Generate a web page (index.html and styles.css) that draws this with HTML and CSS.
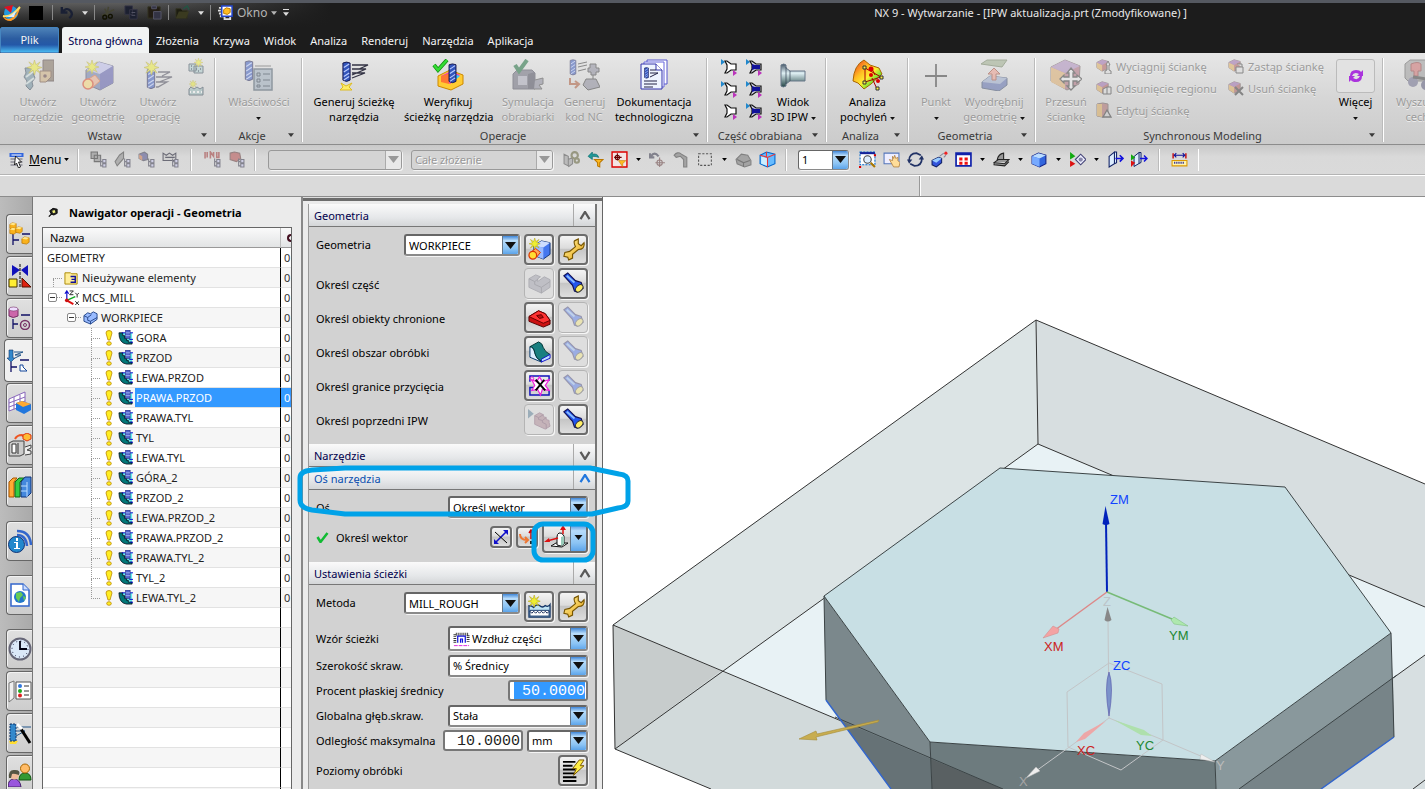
FILE: index.html
```html
<!DOCTYPE html>
<html lang="pl">
<head>
<meta charset="utf-8">
<title>NX 9 - Wytwarzanie</title>
<link rel="stylesheet" href="styles.css">
</head>
<body>
<svg class="defs" aria-hidden="true">
  <defs>
    <linearGradient id="g-rain" x1="0" y1="0" x2="1" y2="1"><stop offset="0" stop-color="#e22"/><stop offset=".35" stop-color="#fb2"/><stop offset=".55" stop-color="#fe3"/><stop offset=".8" stop-color="#3d3"/></linearGradient>
    <linearGradient id="g-steel" x1="0" y1="0" x2="0" y2="1"><stop offset="0" stop-color="#456"/><stop offset=".4" stop-color="#dff0f4"/><stop offset="1" stop-color="#244"/></linearGradient>
    <linearGradient id="g-gold" x1="0" y1="0" x2="1" y2="1"><stop offset="0" stop-color="#fff6a0"/><stop offset="1" stop-color="#e8a010"/></linearGradient>
    <symbol id="star" viewBox="0 0 16 16"><path d="M8 0l1.500 5L14 2l-3 4.500 5 1.500-5 1.500 3 4.500-4.500-3L8 16l-1.500-5L2 14l3-4.500L0 8l5-1.500L2 2l4.500 3z" fill="#ee3" stroke="#a90" stroke-width=".6"/></symbol>
    <symbol id="mill" viewBox="0 0 10 24"><path d="M1 2q4-2 8 0v19q-4 3-8 0z" fill="#35b" stroke="#114"/><path d="M2 7l6-4M2 12l6-4M2 17l6-4M2 21l6-4" stroke="#bcf" stroke-width="1.300"/></symbol>
    <symbol id="i-tool" viewBox="0 0 32 32"><path d="M3 9h9l-1 5 2 5-3 4 1 4-3 4-4-4 1-5-3-4 2-4z" fill="#689" stroke="#345"/><path d="M4 18l8-6M4 25l8-6" stroke="#cdd" stroke-width="2"/><path d="M21 1h11v21h-7v-7h-4z" fill="#765" stroke="#433"/><path d="M18 12h11v6l-5 5h-6z" fill="#ca7" stroke="#643"/><circle cx="23" cy="17" r="1.800" fill="#533"/><use href="#star" x="5" y="1" width="15" height="15"/></symbol>
    <symbol id="i-geom" viewBox="0 0 32 32"><path d="M4 11l13-8 14 4v17l-13 7-14-6z" fill="#67a" stroke="#446"/><path d="M4 11l13-8 14 4-13 8z" fill="#bbe"/><path d="M18 15v16l13-7V7z" fill="#55a"/><path d="M5 21l8-5 5 6-8 7z" fill="#ea8" stroke="#d63"/><circle cx="6" cy="25" r="5" fill="#fd7" stroke="#d42" stroke-width="1.500"/><use href="#star" x="3" y="1" width="14" height="14"/></symbol>
    <symbol id="i-oper" viewBox="0 0 32 32"><use href="#mill" x="4" y="9" width="10" height="22"/><path d="M16 13h12l-8 4M14 18h16l-13 5M14 23h11l-9 5h-2" fill="none" stroke="#445" stroke-width="1.300"/><use href="#star" x="2" y="1" width="15" height="15"/></symbol>
    <symbol id="i-props" viewBox="0 0 32 32"><use href="#mill" x="1" y="1" width="10" height="22"/><path d="M12 7h16M12 11h9" stroke="#555"/><path d="M11 10h18v21H11z" fill="#9ab" stroke="#456" stroke-width="1.500"/><path d="M14 14h3v3h-3zM14 20h3v3h-3zM14 26h3v2h-3zM20 15h7M20 21h7M20 27h7" fill="none" stroke="#234"/></symbol>
    <symbol id="i-gen" viewBox="0 0 32 32"><path d="M3 24l5 3 6-3-3 4 3 3H2l3-3z" fill="#fe6" stroke="#db2"/><use href="#mill" x="4" y="1" width="9" height="24"/><path d="M14 6h16l-9 4M14 10h14l-14 6M14 14h13l-13 5" fill="none" stroke="#334" stroke-width="1.300"/></symbol>
    <symbol id="i-verify" viewBox="0 0 32 32"><path d="M6 17l12-6 13 5v9l-12 6-13-4z" fill="#fc3" stroke="#c80"/><path d="M9 17l10-5 9 4-10 9z" fill="#e3c"/><path d="M9 17l9-3-1 11-8-2z" fill="#f73"/><path d="M19 14l9 3-8 7z" fill="#3cf"/><use href="#mill" x="16" y="4" width="9" height="21"/><path d="M2 6l4 5L15 1" fill="none" stroke="#181" stroke-width="4"/><path d="M2 6l4 5L15 1" fill="none" stroke="#3d3" stroke-width="2.500"/></symbol>
    <symbol id="i-sim" viewBox="0 0 32 32"><path d="M1 15l4-4h15l3 3v16H1z" fill="#667" stroke="#445"/><path d="M6 17h9v9H6z" fill="#aab"/><path d="M16 15l7-2v17h-7z" fill="#445"/><path d="M23 21l8-2v6l-4 1 3 4h-8" fill="#889" stroke="#444"/><path d="M3 6l4 6L15 1" fill="none" stroke="#163" stroke-width="4"/></symbol>
    <symbol id="i-nc" viewBox="0 0 32 32"><use href="#mill" x="1" y="0" width="8" height="17"/><path d="M10 5l9-2M10 8l9-2M10 12l8-2" stroke="#333"/><path d="M2 19v6h8M7 22l4 3-4 4" fill="none" stroke="#a53" stroke-width="2"/><path d="M22 5h6v4h3v4h-3v3h-5v-3h-3V9h2zM25 16v4M18 20h10l4 8-12 3-5-5z" fill="#889" stroke="#333"/></symbol>
    <symbol id="i-doc" viewBox="0 0 32 32"><path d="M9 1h20v24H9z" fill="#fff" stroke="#55c"/><path d="M6 3h20v25H6z" fill="#fff" stroke="#66d"/><path d="M3 5h15l6 6v19H3z" fill="#eef4ff" stroke="#33a"/><path d="M18 5v6h6" fill="#fff" stroke="#33a"/><use href="#mill" x="6" y="8" width="5" height="12"/><path d="M12 11h6M12 14h8l-8 4M6 22h13M6 25h13M6 28h9" fill="none" stroke="#224"/></symbol>
    <symbol id="i-ipw" viewBox="0 0 32 32"><path d="M4 6q3-2 5 0v3l4 3h15v10H13l-4 3v2q-3 2-5 0z" fill="url(#g-steel)" stroke="#678"/><path d="M9 8v17M13 12v10" stroke="#345" stroke-width=".7"/></symbol>
    <symbol id="i-draft" viewBox="0 0 32 32"><path d="M1 22Q2 6 12 1l6 5 9 3 3 6-11 10-7 5-6-6z" fill="url(#g-rain)" stroke="#a60"/><path d="M13 9l16 9-16 5zM20 19l5 11M19 8l4 8" fill="none" stroke="#a00"/><g fill="#fe4" stroke="#333"><path d="M11 7h3v3h-3zM11 22h3v3h-3zM28 17h3v3h-3zM24 28h3v3h-3z"/></g><circle cx="19" cy="10" r="2.500" fill="#d00"/><circle cx="19" cy="16" r="2" fill="#d00"/><circle cx="26" cy="22" r="2" fill="#d00"/></symbol>
    <symbol id="i-point" viewBox="0 0 32 32"><path d="M16 5v23M5 17h22" stroke="#333" stroke-width="1.800"/></symbol>
    <symbol id="i-extract" viewBox="0 0 32 32"><path d="M3 5l6-4h20l-5 7z" fill="#9a8" stroke="#675"/><path d="M4 23l8-6 17 2v7l-8 6-17-3z" fill="#56a" stroke="#346"/><path d="M4 23l8-6 17 2-7 6z" fill="#9ac"/><path d="M14 21v-6h-4l6-6 6 6h-4v6z" fill="#e98" stroke="#943"/></symbol>
    <symbol id="i-moveface" viewBox="0 0 32 32"><path d="M1 8l14-7 15 6-1 18-12 6-16-9z" fill="#a67" stroke="#655"/><path d="M1 8l14 6v16L1 23z" fill="#da6"/><path d="M1 8l14-7 15 6-15 7z" fill="#a8b"/><path d="M21 9l4 5h-2v4h4v-2l5 4-5 4v-2h-4v5h2l-4 4-4-4h2v-5h-5v2l-4-4 4-4v2h5v-4h-2z" fill="#eee" stroke="#333" stroke-width="1.300"/></symbol>
    <symbol id="i-find" viewBox="0 0 32 32"><path d="M1 5l5-4h24v13l-5 8H4l-3-3z" fill="#999" stroke="#555"/><path d="M7 5q7-3 10 0v7h-3v5h-4v-5H7z" fill="#c66" stroke="#833"/><circle cx="9" cy="23" r="5" fill="#668"/><circle cx="22" cy="26" r="5" fill="#557"/><path d="M9 18l14 2" stroke="#333" stroke-width="3"/></symbol>
    <symbol id="i-more" viewBox="0 0 20 20"><path d="M4 10q0-6 6-6 4 0 5 2l2-2v6h-6l2-2q-5-3-7 2zM16 10q0 6-6 6-4 0-5-2l-2 2v-6h6l-2 2q5 3 7-2z" fill="#a3d"/></symbol>
    <symbol id="s-prog" viewBox="0 0 16 16"><path d="M1 6h7v7H1zM6 8h9v7H6z" fill="#acc" stroke="#345"/><path d="M3 8h1M8 11h1M12 11h1M10 13h1M3 11h1" stroke="#234" stroke-width="1.500"/><use href="#star" x="6" y="0" width="9" height="9"/></symbol>
    <symbol id="s-meth" viewBox="0 0 16 16"><path d="M1 9l2-2 3 2 3-2 3 2 3-2v8H1z" fill="#9bb" stroke="#345"/><path d="M2 12h1M5 12h2M9 12h2M13 12h1" stroke="#fff" stroke-width="2"/><use href="#star" x="1" y="0" width="8" height="8"/></symbol>
    <symbol id="s-wp1" viewBox="0 0 18 18"><path d="M1 1l4 3-4 3z" fill="#28c"/><path d="M5 3h2l4 3h5v6h-5l-4 3H5l2-4V7z" fill="#fff" stroke="#111" stroke-width="1.200"/><path d="M13 12l4 3-4 3z" fill="#b3b"/></symbol>
    <symbol id="s-wp2" viewBox="0 0 18 18"><path d="M1 1l4 3-4 3z" fill="#28c"/><path d="M5 3h2l4 3h5v6h-5l-4 3H5l2-4V7z" fill="#ccd" stroke="#111" stroke-width="1.200"/><path d="M7 6l3 1h5v4h-5l-3 1z" fill="#119"/><path d="M13 12l4 3-4 3z" fill="#b3b"/></symbol>
    <symbol id="s-wp3" viewBox="0 0 18 18"><path d="M5 3h2l4 3h5v6h-5l-4 3H5l2-4V7z" fill="#fff" stroke="#111" stroke-width="1.200"/><path d="M13 12l4 3-4 3z" fill="#b3b"/></symbol>
    <symbol id="s-box" viewBox="0 0 16 16"><path d="M1 5l6-3 7 2v8l-7 3-6-4z" fill="#a55" stroke="#655"/><path d="M1 5l6 3v7l-6-4z" fill="#da5"/><path d="M1 5l6-3 7 2-7 4z" fill="#96a"/></symbol>
    <symbol id="f-pull" viewBox="0 0 16 16"><use href="#s-box" width="14" height="14"/><path d="M12 3l2 4h-1v5l2 1v3H9v-3l2-1V7h-1z" fill="#ddd" stroke="#333"/></symbol>
    <symbol id="f-offset" viewBox="0 0 16 16"><use href="#s-box" width="14" height="14"/><path d="M7 9l4-2v7H7zM11 7h4v7h-4" fill="#ddd" stroke="#333"/></symbol>
    <symbol id="f-edit" viewBox="0 0 16 16"><path d="M1 2q6-2 11 0v12q-6 2-11 0z" fill="#a66" stroke="#655"/><path d="M1 2h5v13l-5-1z" fill="#da5"/><path d="M11 8l4 7H7z" fill="#ccc" stroke="#333" stroke-width="1.300"/></symbol>
    <symbol id="f-repl" viewBox="0 0 16 16"><use href="#s-box" width="14" height="14"/><path d="M8 9h7v6H8zM9 6h5v3" fill="#ddd" stroke="#333"/></symbol>
    <symbol id="f-del" viewBox="0 0 16 16"><use href="#s-box" width="14" height="14"/><path d="M7 7l8 8M15 7l-8 8" stroke="#333" stroke-width="2"/></symbol>
    <symbol id="t-tree" viewBox="0 0 16 16"><path d="M10 7v7h2M10 10h2" fill="none" stroke="#556"/><path d="M12 8h3v3h-3zM12 12h3v3h-3z" fill="#cce" stroke="#556"/></symbol>
    <symbol id="t-1" viewBox="0 0 16 16"><path d="M1 1h6v6H1zM4 4h6v6H4z" fill="#999" stroke="#444"/><use href="#t-tree" width="16" height="16"/></symbol>
    <symbol id="t-2" viewBox="0 0 16 16"><path d="M5 4l4-3v6l-6 7-2-4z" fill="#999" stroke="#555"/><use href="#t-tree" width="16" height="16"/></symbol>
    <symbol id="t-3" viewBox="0 0 16 16"><path d="M1 3l5-2 3 2v5L5 9 1 7z" fill="#669" stroke="#556"/><path d="M1 3l3 2v4L1 7z" fill="#c86"/><use href="#t-tree" width="16" height="16"/></symbol>
    <symbol id="t-4" viewBox="0 0 16 16"><path d="M1 2l3 2 3-2 3 2 3-2v7H1zM3 6h9" fill="#ccc" stroke="#334"/><use href="#t-tree" width="16" height="16"/></symbol>
    <symbol id="t-5" viewBox="0 0 16 16"><path d="M1 1v6M3 1v5M6 7V1l3 4V1M12 1v5h2V1" fill="none" stroke="#a55" stroke-width="1.500"/><use href="#t-tree" width="16" height="16"/></symbol>
    <symbol id="t-6" viewBox="0 0 16 16"><path d="M2 2l4-1 5 1 1 5-4 3-6-2z" fill="#b66" stroke="#755"/><use href="#t-tree" width="16" height="16"/></symbol>
    <symbol id="t-menu" viewBox="0 0 16 16"><path d="M1 1h14v4H1z" fill="#36d"/><path d="M3 3h10" stroke="#fff"/><path d="M2 7h12M2 10h12M2 13h12" stroke="#667"/><path d="M7 4l6 6H10l2 5-2 1-2-5-2 2z" fill="#fff" stroke="#000" stroke-width=".8"/></symbol>
    <symbol id="t-7" viewBox="0 0 16 16"><path d="M1 3l4 2v9l-4-2zM5 8l4-2v6l-4 3" fill="#aaa" stroke="#666"/><circle cx="11" cy="4" r="3" fill="none" stroke="#775" stroke-width="2"/><circle cx="13" cy="9" r="2" fill="none" stroke="#775" stroke-width="2"/></symbol>
    <symbol id="t-filter" viewBox="0 0 16 16"><path d="M1 5l4-4v2q5-1 6 3-2-1-6-1v3z" fill="#299" stroke="#066" stroke-width=".6"/><path d="M7 8h8l-3 3v4l-2-1v-3z" fill="#fb2" stroke="#b70"/></symbol>
    <symbol id="t-8" viewBox="0 0 16 16"><path d="M1 1h14v14H1z" fill="#f4e4e4" stroke="#d00" stroke-width="1.300"/><path d="M6 2v7M3 6h7" stroke="#600"/><circle cx="6" cy="6" r="2" fill="none" stroke="#600"/><path d="M7 9h7l-3 3v3z" fill="#fb2" stroke="#b70" stroke-width=".5"/></symbol>
    <symbol id="t-9" viewBox="0 0 16 16"><path d="M2 5q3-5 7 0M1 2v4h4" fill="none" stroke="#556" stroke-width="2"/><path d="M10 6v9M6 11h9" stroke="#755"/><circle cx="10" cy="11" r="2.500" fill="none" stroke="#755"/></symbol>
    <symbol id="t-10" viewBox="0 0 16 16"><path d="M1 4q3-4 7-1l5 3v9h-3V8L7 5 3 6z" fill="#888" stroke="#555"/></symbol>
    <symbol id="t-rect" viewBox="0 0 16 16"><path d="M1.500 2.500h12v11h-12z" fill="none" stroke="#555" stroke-dasharray="2 1.500"/></symbol>
    <symbol id="t-11" viewBox="0 0 16 16"><path d="M1 8l5-5 6 1 3 5v4l-6 2-7-3z" fill="#888" stroke="#555"/><path d="M2 8l6 3v4M8 11l6-2" stroke="#444" fill="none"/></symbol>
    <symbol id="t-cube" viewBox="0 0 16 16"><path d="M1 4l6-3 8 2v9l-7 3-7-3z" fill="#6bf" stroke="#06c"/><path d="M2 5l6 2v7l-6-2z" fill="#cef"/><path d="M1 4l7 2 7-3M8 6v9M7 1v5" stroke="#e33" fill="none"/></symbol>
    <symbol id="t-fit" viewBox="0 0 16 16"><path d="M1 1h14v12H1z" fill="#fff" stroke="#06c" stroke-dasharray="2 1"/><path d="M1 1h14v2H1z" fill="#129"/><circle cx="8" cy="8" r="3.500" fill="#def" stroke="#444"/><path d="M11 11l4 4" stroke="#a70" stroke-width="2"/><path d="M0 14h2v2H0zM14 3h2v2h-2z" fill="#d00"/></symbol>
    <symbol id="t-pan" viewBox="0 0 16 16"><path d="M1 2h14v10H1z" fill="#eef" stroke="#57b"/><path d="M6 8l3 1V5l1 2 1-3 1 3 2-1v3l2 2-1 4h-5z" fill="#fd9" stroke="#a73" stroke-width=".7"/></symbol>
    <symbol id="t-rot" viewBox="0 0 16 16"><path d="M2 9Q2 2 9 2l4 2M14 7q0 7-7 7l-4-2" fill="none" stroke="#236" stroke-width="1.600"/><path d="M0 8h5L2 12zM16 8h-5l3-4z" fill="#236"/></symbol>
    <symbol id="t-persp" viewBox="0 0 16 16"><path d="M1 9l6-3 3 1v4l-5 4-4-2z" fill="#35d" stroke="#126"/><path d="M1 9l6-3 3 1-5 4z" fill="#9cf"/><path d="M8 5l4-3M12 6l2-2" stroke="#889"/><circle cx="14" cy="2" r="1.500" fill="#e22"/></symbol>
    <symbol id="t-grid" viewBox="0 0 16 16"><path d="M1 2h14v12H1z" fill="#fff" stroke="#12a" stroke-width="1.600"/><path d="M1 2h14v2H1z" fill="#12a"/><path d="M4 6h3v3H4zM9 6h3v3H9zM4 10h3v3H4zM9 10h3v3H9z" fill="#e11"/></symbol>
    <symbol id="t-clip" viewBox="0 0 16 16"><path d="M4 8q1-5 6-6v6zM1 11l4-3h10l-4 4zM1 11v2l10 1 4-4" fill="#999" stroke="#222"/></symbol>
    <symbol id="t-shade" viewBox="0 0 16 16"><path d="M1 5l6-3 7 2v8l-6 3-7-3z" fill="#36d" stroke="#128"/><path d="M1 5l7 2 6-3-7-2z" fill="#bdf"/><path d="M8 7v8l-7-3V5z" fill="#7af"/></symbol>
    <symbol id="t-arrow" viewBox="0 0 16 16"><path d="M1 1l5 4-5 3z" fill="#1a1"/><path d="M1 9l5 3-5 3z" fill="#d11"/><path d="M6 8l5-5 5 5-5 5z" fill="#eef" stroke="#447"/><circle cx="11" cy="8" r="2" fill="#88a"/></symbol>
    <symbol id="t-sec" viewBox="0 0 16 16"><path d="M2 5l5-4v11l-5 3zM7 1h2v10l-2 1" fill="#def" stroke="#126"/><path d="M8 7h6M12 4l3 3-3 3" fill="none" stroke="#11d" stroke-width="1.500"/></symbol>
    <symbol id="t-sec2" viewBox="0 0 16 16"><use href="#t-sec" x="1" width="15" height="16"/><path d="M0 3l4 3-4 3z" fill="#1a1"/><path d="M0 9l4 2-4 4z" fill="#d11"/></symbol>
    <symbol id="t-meas" viewBox="0 0 16 16"><path d="M2 2v5M14 2v5" fill="none" stroke="#c22" stroke-width="1.500"/><path d="M3 4h10M5 2L3 4l2 2M11 2l2 2-2 2" stroke="#119" fill="none"/><path d="M1 9h14v5H1z" fill="#fff4b0" stroke="#d90"/><path d="M3 11h10" stroke="#119" stroke-width="2" stroke-dasharray="1 1"/></symbol>
    <symbol id="q-logo" viewBox="0 0 20 18"><circle cx="9" cy="9" r="7" fill="#29d"/><path d="M1 12q5 7 13-2l4-8q-1 11-9 15-7 0-8-5z" fill="#f92"/><path d="M1 12Q9 14 18 3" fill="none" stroke="#fd6" stroke-width="2"/><path d="M2 3l9-2-2 8z" fill="#d12"/><path d="M5 13q5-2 9-6l-2 6z" fill="#def"/></symbol>
    <symbol id="q-undo" viewBox="0 0 16 16"><path d="M3 2v6h6M3 8q5-6 9-2t-1 8" fill="none" stroke="#1a2034" stroke-width="2.500"/></symbol>
    <symbol id="q-cut" viewBox="0 0 16 16"><path d="M4 4l5 9M1 11l13-6M8 2l-2 9" stroke="#443" stroke-width="1.600"/><circle cx="4" cy="13" r="2" fill="none" stroke="#110" stroke-width="1.500"/><circle cx="10" cy="12" r="2" fill="none" stroke="#110" stroke-width="1.500"/></symbol>
    <symbol id="q-copy" viewBox="0 0 16 16"><path d="M1 1h8v9H1zM6 5h8v10H6z" fill="#1c2030" stroke="#334"/><path d="M8 8h4M8 11h4" stroke="#556"/></symbol>
    <symbol id="q-paste" viewBox="0 0 16 16"><path d="M1 2h13v12H1z" fill="#221c14" stroke="#332"/><path d="M5 1h5v3H5zM7 7h8v8H7z" fill="#334" stroke="#556"/></symbol>
    <symbol id="q-open" viewBox="0 0 16 16"><path d="M1 4h5l2 2h5v8H1z" fill="#1c1c10" stroke="#332"/><path d="M1 14l3-7h11l-3 7z" fill="#3a3a20"/><path d="M9 4l4-3 2 4" fill="none" stroke="#254" stroke-width="1.500"/></symbol>
    <symbol id="q-win" viewBox="0 0 16 16"><path d="M1 3h4M0 6h3M1 9h4M2 12h5v3h6v-3" fill="none" stroke="#ddd" stroke-width="2"/><path d="M4 1h11v11H4z" fill="#fff" stroke="#24c" stroke-width="1.600"/><path d="M6 5l3-2 4 1v4l-3 2-4-1z" fill="#fb2" stroke="#b70"/></symbol>
    <symbol id="cubelet" viewBox="0 0 10 10"><path d="M1 3l3-2 5 1v5L6 9 1 8z" fill="#f9b21c" stroke="#b87400" stroke-width=".8"/><path d="M1 3l3-2 5 1-3 2z" fill="#ffe68a"/></symbol>
    <symbol id="r-asm" viewBox="0 0 24 24"><path d="M5 12v11M5 18h6M14 12h8" stroke="#116" stroke-width="1.300" fill="none"/><use href="#cubelet" x="1" y="0" width="8" height="8"/><use href="#cubelet" x="1" y="5" width="8" height="8"/><use href="#cubelet" x="7" y="4" width="8" height="8"/><use href="#cubelet" x="13" y="14" width="9" height="9"/></symbol>
    <symbol id="r-con" viewBox="0 0 24 24"><path d="M4 1l8 5-8 6zM20 1l-7 5 7 6z" fill="#11b"/><path d="M12 0v24" stroke="#000" stroke-dasharray="3 1"/><path d="M1 15h8v8H1z" fill="#fe3" stroke="#430"/><path d="M14 14v9h9z" fill="#d21" stroke="#510"/></symbol>
    <symbol id="r-part" viewBox="0 0 24 24"><path d="M1 3v7q4 3 9 0V3z" fill="#c6a" stroke="#736"/><ellipse cx="5.500" cy="3" rx="4.500" ry="2" fill="#edf" stroke="#736" stroke-width=".6"/><path d="M13 9h9M5 13v10M5 18h5" stroke="#116" stroke-width="1.300"/><circle cx="17" cy="19" r="4.500" fill="none" stroke="#736" stroke-width="1.500"/><circle cx="17" cy="19" r="1.500" fill="none" stroke="#736"/></symbol>
    <symbol id="r-op" viewBox="0 0 24 24"><path d="M2 1h4v8h2l-4 4-4-4h2z" fill="#38c" stroke="#136" stroke-width=".6"/><path d="M7 3h9l-8 3M8 6h6l-6 3" stroke="#258" fill="none"/><path d="M13 11h9M4 13v10M4 18h6" stroke="#116" stroke-width="1.300"/><path d="M13 16h3v2l4 4h-7z" fill="#fff" stroke="#149"/></symbol>
    <symbol id="r-fea" viewBox="0 0 24 24"><path d="M1 8l16-7v13L1 20zM1 12l16-6M1 16l16-6M6 6v12M12 4v12" fill="#fff" stroke="#86b"/><path d="M8 12l6-2 9 3v6l-7 4-8-4z" fill="#27d"/><path d="M8 12l6-2 9 3-8 3z" fill="#fa3"/></symbol>
    <symbol id="r-mach" viewBox="0 0 24 24"><path d="M1 10l4-2h11v13l-4 2H1z" fill="#ccc" stroke="#444"/><path d="M4 11h4v9H4zM10 10v11" fill="#fff" stroke="#333"/><path d="M7 6q2-4 7-4l2 2" fill="none" stroke="#e52" stroke-width="2"/><path d="M15 2l4-2 4 2v4l-4 2-4-2z" fill="#fb3" stroke="#d31"/><path d="M17 14l6-2v3l-4 2 4 1v3l-6 1" fill="#eee" stroke="#444"/></symbol>
    <symbol id="r-lib" viewBox="0 0 24 24"><path d="M1 7l4-4h4L6 7v15H1z" fill="#fa3" stroke="#a50"/><path d="M7 7l4-4h5l-4 4v15H7z" fill="#3c4" stroke="#161"/><path d="M13 7l4-5h6v16l-4 4h-6z" fill="#48d" stroke="#137"/><path d="M13 11h6M13 16h6M19 7v15" stroke="#bdf"/></symbol>
    <symbol id="r-info" viewBox="0 0 24 24"><path d="M9 6q9 0 10 11M9 2q13 0 14 14" fill="none" stroke="#36c" stroke-width="2.500"/><circle cx="8.500" cy="15.500" r="8" fill="#28c" stroke="#137"/><path d="M8 9h2v3H8zM6 13h4v6h2v1H6v-1h2v-5H6z" fill="#fff"/></symbol>
    <symbol id="r-web" viewBox="0 0 24 24"><path d="M3 1h12l6 6v16H3z" fill="#fff" stroke="#36c" stroke-width="1.500"/><path d="M15 1v6h6" fill="#cdf" stroke="#36c"/><circle cx="12" cy="14" r="6" fill="#27c"/><path d="M8 10l5-1 2 3-3 3-1 4-3-4zM15 13l3 1-2 4z" fill="#6c5"/></symbol>
    <symbol id="r-clock" viewBox="0 0 24 24"><circle cx="12" cy="12" r="10.500" fill="#dbe8f8" stroke="#667" stroke-width="2"/><circle cx="12" cy="12" r="8" fill="none" stroke="#224" stroke-dasharray="1 3.200"/><path d="M12 4v8h7" fill="none" stroke="#001" stroke-width="1.800"/></symbol>
    <symbol id="r-role" viewBox="0 0 24 24"><path d="M1 4l5-2v17l-5 4z" fill="#eee" stroke="#777"/><path d="M8 3h15v17H8z" fill="#fff" stroke="#555"/><circle cx="12" cy="7" r="2" fill="#37d"/><circle cx="12" cy="12" r="2" fill="#2a2"/><circle cx="12" cy="16.500" r="2" fill="#d22"/><path d="M16 7h5M16 12h5M16 16h5" stroke="#333"/></symbol>
    <symbol id="r-wiz" viewBox="0 0 24 24"><path d="M1 20l4-1 5 1-2 3H2z" fill="#fd3"/><path d="M2 3h6v17H2z" fill="#38c" stroke="#136" stroke-dasharray="2 1"/><path d="M9 6h14M9 10h8l-9 5" stroke="#258" fill="none"/><path d="M13 8l9 14" stroke="#000" stroke-width="3"/><path d="M9 3l5 5" stroke="#fff" stroke-width="3"/></symbol>
    <symbol id="r-team" viewBox="0 0 24 24"><path d="M11 17q0-7 6-7t6 7z" fill="#393" stroke="#151"/><circle cx="17" cy="5.500" r="4.500" fill="#fb6" stroke="#a60"/><path d="M0 24q0-8 6-8t7 8z" fill="#95d" stroke="#426"/><circle cx="6.500" cy="12" r="4.500" fill="#eb9"/><path d="M1 15q-1-9 6-8 6 0 4 5-6-2-7-1l-1 4z" fill="#554"/></symbol>
    <symbol id="n-pin" viewBox="0 0 12 12"><path d="M1 11l4-4" stroke="#000" stroke-width="1.500"/><path d="M2 4l4-3 5 1v5L7 9 4 8z" fill="#222" stroke="#000"/><path d="M5 4l3-1 1 3-3 1z" fill="#ee7"/></symbol>
    <symbol id="n-fold" viewBox="0 0 16 16"><path d="M1 3h6l1 1h6v11H1z" fill="#fe9" stroke="#a80"/><path d="M7 7h5v6H7M8 10h4" fill="none" stroke="#119" stroke-width="1.500"/></symbol>
    <symbol id="n-mcs" viewBox="0 0 16 16"><path d="M3 12V2M1 4l2-3 2 3" fill="none" stroke="#11c" stroke-width="1.300"/><path d="M3 11l9-4" stroke="#1a2" stroke-width="1.500"/><path d="M3 11l7 4" stroke="#d11" stroke-width="2"/><circle cx="3" cy="11" r="2" fill="#c11"/><path d="M6 1h4L6 5h4M12 3l2 2 2-2M14 5v3M12 12l4 4M16 12l-4 4" stroke="#222" fill="none"/></symbol>
    <symbol id="n-wp" viewBox="0 0 16 16"><path d="M1 6l4-3 3 1 3-2 4 2v6l-7 5-7-3z" fill="#9bf" stroke="#248"/><path d="M1 6l4 2v3l3 1v3M5 8l4-3M8 12l7-4" fill="none" stroke="#248"/></symbol>
    <symbol id="n-ex" viewBox="0 0 8 16"><path d="M1 3q0-2.500 3-2.500T7 3L5 10H3z" fill="#fe2" stroke="#b80" stroke-width=".8"/><ellipse cx="4" cy="13.500" rx="2.300" ry="1.800" fill="#fe2" stroke="#b80" stroke-width=".8"/></symbol>
    <symbol id="n-op" viewBox="0 0 16 16"><path d="M4 3h11v11h-5z" fill="#6ee"/><path d="M1 3h4v3h2v3h2v2h2v2h4v2H9Q1 14 1 3z" fill="#077" stroke="#001" stroke-width=".8"/><path d="M8 0h5v9H8z" fill="#56c" stroke="#226" stroke-width=".6"/><path d="M8 3h5M8 6h5" stroke="#bcf" stroke-width=".7"/><path d="M4 3h4M13 3h3M12 10h4M13 13h3" stroke="#00c"/></symbol>
    <symbol id="d-flash" viewBox="0 0 24 24"><path d="M2 4l4-3 8 8 6 2 2 6-6 4-3-1-2-6z" fill="#25e" stroke="#115" stroke-width="1.200"/><path d="M5 4l8 7" stroke="#8bf" stroke-width="2"/><ellipse cx="18" cy="17" rx="4.500" ry="3" transform="rotate(-45 18 17)" fill="#fe6" stroke="#333"/></symbol>
    <symbol id="d-wrench" viewBox="0 0 24 24"><path d="M13 3l4-2v5l3 2 3-3q1 7-6 7l-6 5v4l-4 2-1-3-4-1 1-4 5-1 6-5q-2-4-1-6z" fill="url(#g-gold)" stroke="#750" stroke-width="1.200"/></symbol>
    <symbol id="d-geom" viewBox="0 0 24 24"><path d="M6 8l8-5 9 2v12l-7 5-10-4z" fill="#47e" stroke="#137"/><path d="M6 8l8-5 9 2-7 5z" fill="#cdf"/><path d="M6 8l10 2v12L6 18z" fill="#9bf"/><path d="M4 14l4-3 5 4-4 5z" fill="#fa5" stroke="#d30"/><circle cx="5" cy="18" r="4" fill="#fd3" stroke="#d30" stroke-width="1.300"/><use href="#star" x="1" y="0" width="12" height="12"/></symbol>
    <symbol id="d-part" viewBox="0 0 24 24"><path d="M1 7l7-4 5 2-3 2v3l7-5 6 3v8l-9 6L1 16z" fill="#889" stroke="#556"/><path d="M1 7l6 3v3l7 3v6M14 16l9-6M7 10l4-3" fill="none" stroke="#445"/></symbol>
    <symbol id="d-check" viewBox="0 0 24 24"><path d="M1 11l10-6 7 3 5 7v4l-7 3L1 16z" fill="#c11" stroke="#500"/><path d="M1 11l10-6 7 3 5 7-7 3z" fill="#f33" stroke="#600"/><path d="M9 10l5-1 2 3-4 1z" fill="#b11" stroke="#600"/></symbol>
    <symbol id="d-area" viewBox="0 0 24 24"><path d="M2 7q4 0 5 6 1 6 7 10L2 18z" fill="#def" stroke="#036"/><path d="M2 7l9-5q4 1 5 6 2 5 7 7l-9 7q-6-3-7-9-1-6-5-6z" fill="#197f80" stroke="#033"/><path d="M14 20l9-5v4l-9 4z" fill="#bdf" stroke="#11c"/></symbol>
    <symbol id="d-trim" viewBox="0 0 24 24"><path d="M2 8V2h20v5M22 17v5H2v-8h4" fill="none" stroke="#11b" stroke-width="1.500"/><path d="M4 6l5 2 3-5 3 5 7-2-4 6 4 5-7-1-2 6-3-6-6 1 3-5z" fill="#fff" stroke="#e2d" stroke-width="1.300"/><circle cx="4" cy="5" r="2" fill="none" stroke="#e2d"/><path d="M8 6l10 11M17 6L8 17" stroke="#000" stroke-width="2"/></symbol>
    <symbol id="d-prev" viewBox="0 0 24 24"><path d="M0 1l6 5-6 5z" fill="#257"/><path d="M7 8l5-3 4 2v2l3 1v2l3 1v2l1 4-5 3-11-5z" fill="#967" stroke="#635"/><path d="M7 8l4 2v2l4 1v2l4 2v5M11 10l5-3M15 13l4-3" fill="none" stroke="#524"/></symbol>
    <symbol id="d-meth" viewBox="0 0 24 24"><path d="M1 11q3 0 5 2 3-4 6-2 3 3 6 0 3 2 5-1v13H1z" fill="#bfe3f4" stroke="#136" stroke-width="1.300"/><path d="M2 16h20v6H2z" fill="#fff" stroke="#136"/><path d="M2 17l2 2 2-2 2 2 2-2 2 2 2-2 2 2 2-2 2 2 2-2" fill="none" stroke="#125"/><use href="#star" x="0" y="0" width="13" height="13"/></symbol>
    <symbol id="d-level" viewBox="0 0 24 24"><path d="M1 3h13M1 7h10M1 11h13M1 15h12M1 19h14M1 23h14" stroke="#000" stroke-width="2"/><path d="M18 1h5l-4 6h4L12 17l3-7h-4z" fill="#fe4" stroke="#750"/></symbol>
    <symbol id="d-rev" viewBox="0 0 16 16"><path d="M2 14L14 2" stroke="#11c" stroke-width="1.600"/><path d="M10 1h5v5zM1 10v5h5z" fill="#11c"/><path d="M2 3l12 11" stroke="#000"/></symbol>
    <symbol id="d-ori" viewBox="0 0 16 16"><path d="M1 5q0 6 7 6M6 8l3 3-3 3" fill="none" stroke="#e73" stroke-width="2"/><path d="M12 2v8M10 4l2-3 2 3" stroke="#c00" fill="none" stroke-width="1.500"/><path d="M11 12h3v3h-3z" fill="#222"/></symbol>
    <symbol id="d-vec" viewBox="0 0 26 24"><path d="M7 21l5-3h12l-6 4z" fill="#fff" stroke="#111"/><path d="M13 12v8l4 1 3-2v-8q-2-4-5-3-2 1-2 4z" fill="#fff" stroke="#111"/><path d="M17 12l3-1v8l-3 2z" fill="#9cb"/><path d="M14 13L3 16M19 9V2" stroke="#d11" stroke-width="1.500" fill="none"/><path d="M16 5l3-5 3 5zM0 17l5-4 1 4z" fill="#d11"/></symbol>
    <symbol id="d-pat" viewBox="0 0 18 16"><path d="M2 12V3h14v9" fill="none" stroke="#333" stroke-width="3" stroke-dasharray="1 1"/><path d="M5 12V5h8v7M8 12V8h2v4" fill="none" stroke="#11d" stroke-width="1.300"/><path d="M1 15h16" stroke="#d2d" stroke-dasharray="4 1"/></symbol>
    <symbol id="caret" viewBox="0 0 8 5"><path d="M0 0h8L4 5z" fill="currentColor"/></symbol>
    <symbol id="chev-up" viewBox="0 0 12 10"><path d="M1 9l5-8 5 8" fill="none" stroke="currentColor" stroke-width="2.500"/></symbol>
    <symbol id="chev-dn" viewBox="0 0 12 10"><path d="M1 1l5 8 5-8" fill="none" stroke="currentColor" stroke-width="2.500"/></symbol>
    <symbol id="tick" viewBox="0 0 12 12"><path d="M1 6l3 5 7-9" fill="none" stroke="#1b3" stroke-width="2.500"/></symbol>
  </defs>
</svg>

<div class="app">
  <header class="titlebar">
    <svg class="logo"><use href="#q-logo"/></svg>
    <button class="qa save" aria-label="Zapisz"></button><i class="qsep"></i>
    <button class="qa" aria-label="Cofnij"><svg><use href="#q-undo"/></svg></button>
    <button class="qdrop" aria-label="Historia"><svg class="caret"><use href="#caret"/></svg></button><i class="qsep"></i>
    <button class="qa" aria-label="Wytnij"><svg><use href="#q-cut"/></svg></button>
    <button class="qa" aria-label="Kopiuj"><svg><use href="#q-copy"/></svg></button>
    <button class="qa" aria-label="Wklej"><svg><use href="#q-paste"/></svg></button><i class="qsep"></i>
    <button class="qa" aria-label="Otwórz"><svg><use href="#q-open"/></svg></button>
    <button class="qdrop" aria-label="Ostatnie"><svg class="caret"><use href="#caret"/></svg></button><i class="qsep"></i>
    <button class="okno"><svg><use href="#q-win"/></svg>Okno<svg class="caret"><use href="#caret"/></svg></button>
    <button class="qmore" aria-label="Dostosuj"><svg class="caret"><use href="#caret"/></svg></button>
    <h1 class="title">NX 9 - Wytwarzanie - [IPW aktualizacja.prt (Zmodyfikowane) ]</h1>
  </header>

  <nav class="tabs">
    <button class="tab file">Plik</button>
    <button class="tab active">Strona główna</button>
    <button class="tab">Złożenia</button><button class="tab">Krzywa</button><button class="tab">Widok</button><button class="tab">Analiza</button><button class="tab">Renderuj</button><button class="tab">Narzędzia</button><button class="tab">Aplikacja</button>
  </nav>

  <div class="ribbon">
    <section class="group g-insert">
      <div class="tools">
        <button class="big w60" disabled><svg><use href="#i-tool"/></svg>Utwórz<br>narzędzie</button>
        <button class="big w60" disabled><svg><use href="#i-geom"/></svg>Utwórz<br>geometrię</button>
        <button class="big w60" disabled><svg><use href="#i-oper"/></svg>Utwórz<br>operację</button>
        <div class="minis"><button disabled aria-label="Utwórz program"><svg><use href="#s-prog"/></svg></button><button disabled aria-label="Utwórz metodę"><svg><use href="#s-meth"/></svg></button></div>
      </div>
      <footer><span>Wstaw</span><svg class="caret"><use href="#caret"/></svg></footer>
    </section>
    <section class="group g-actions">
      <div class="tools mid"><button class="big" disabled><svg><use href="#i-props"/></svg>Właściwości<br><svg class="caret dark"><use href="#caret"/></svg></button></div>
      <footer><span>Akcje</span><svg class="caret"><use href="#caret"/></svg></footer>
    </section>
    <section class="group g-oper">
      <div class="tools gap9">
        <button class="big w82"><svg><use href="#i-gen"/></svg>Generuj ścieżkę<br>narzędzia</button>
        <button class="big w88"><svg><use href="#i-verify"/></svg>Weryfikuj<br>ścieżkę narzędzia</button>
        <button class="big w54" disabled><svg><use href="#i-sim"/></svg>Symulacja<br>obrabiarki</button>
        <button class="big w40" disabled><svg><use href="#i-nc"/></svg>Generuj<br>kod NC</button>
        <button class="big w82"><svg><use href="#i-doc"/></svg>Dokumentacja<br>technologiczna</button>
      </div>
      <footer><span>Operacje</span><svg class="caret"><use href="#caret"/></svg></footer>
    </section>
    <section class="group g-part">
      <div class="tools">
        <div class="wpgrid"><button aria-label="Przed"><svg><use href="#s-wp1"/></svg></button><button aria-label="Przed 3D"><svg><use href="#s-wp2"/></svg></button><button aria-label="Bieżąca"><svg><use href="#s-wp1"/></svg></button><button aria-label="Bieżąca 3D"><svg><use href="#s-wp2"/></svg></button><button aria-label="Po"><svg><use href="#s-wp3"/></svg></button><button aria-label="Po 3D"><svg><use href="#s-wp2"/></svg></button></div>
        <button class="big w54"><svg><use href="#i-ipw"/></svg>Widok<br>3D IPW <svg class="caret dark"><use href="#caret"/></svg></button>
      </div>
      <footer><span>Część obrabiana</span><svg class="caret"><use href="#caret"/></svg></footer>
    </section>
    <section class="group g-analysis">
      <div class="tools mid"><button class="big"><svg><use href="#i-draft"/></svg>Analiza<br>pochyleń <svg class="caret dark"><use href="#caret"/></svg></button></div>
      <footer><span>Analiza</span><svg class="caret"><use href="#caret"/></svg></footer>
    </section>
    <section class="group g-geom">
      <div class="tools">
        <button class="big w54" disabled><svg><use href="#i-point"/></svg>Punkt<br><svg class="caret dark"><use href="#caret"/></svg></button>
        <button class="big w62" disabled><svg><use href="#i-extract"/></svg>Wyodrębnij<br>geometrię <svg class="caret dark"><use href="#caret"/></svg></button>
      </div>
      <footer><span>Geometria</span><svg class="caret"><use href="#caret"/></svg></footer>
    </section>
    <section class="group g-sync">
      <div class="tools">
        <button class="big w60" disabled><svg><use href="#i-moveface"/></svg>Przesuń<br>ściankę</button>
        <div class="lines l1"><button disabled><svg><use href="#f-pull"/></svg>Wyciągnij ściankę</button><button disabled><svg><use href="#f-offset"/></svg>Odsunięcie regionu</button><button disabled><svg><use href="#f-edit"/></svg>Edytuj ściankę</button></div>
        <div class="lines l2"><button disabled><svg><use href="#f-repl"/></svg>Zastąp ściankę</button><button disabled><svg><use href="#f-del"/></svg>Usuń ściankę</button></div>
        <button class="big more"><span><svg><use href="#i-more"/></svg></span>Więcej<br><svg class="caret dark"><use href="#caret"/></svg></button>
      </div>
      <footer><span>Synchronous Modeling</span><svg class="caret"><use href="#caret"/></svg></footer>
    </section>
    <section class="group g-find">
      <div class="tools"><button class="big w60" disabled><svg><use href="#i-find"/></svg>Wyszukaj<br>cechy</button></div>
      <footer></footer>
    </section>
  </div>

  <div class="toolbar">
    <button class="menu"><svg><use href="#t-menu"/></svg><span><u>M</u>enu</span><svg class="caret"><use href="#caret"/></svg></button>
    <div class="tset ta off"><button disabled aria-label="Widok programu"><svg><use href="#t-1"/></svg></button><button disabled aria-label="Widok narzędzi"><svg><use href="#t-2"/></svg></button><button disabled aria-label="Widok geometrii"><svg><use href="#t-3"/></svg></button><button disabled aria-label="Widok metod"><svg><use href="#t-4"/></svg></button></div>
    <div class="tset tb off"><button disabled aria-label="Szukaj"><svg><use href="#t-5"/></svg></button><button disabled aria-label="Obiekty"><svg><use href="#t-6"/></svg></button></div>
    <div class="tset tc">
      <span class="combo dis c134"><select disabled aria-label="Filtr typu"><option></option></select><span class="drop"><svg><use href="#caret"/></svg></span></span>
      <span class="combo dis c142"><select disabled aria-label="Zakres wyboru"><option>Całe złożenie</option></select><span class="drop"><svg><use href="#caret"/></svg></span></span>
      <button disabled class="off" aria-label="Połączone"><svg><use href="#t-7"/></svg></button><button aria-label="Resetuj filtry"><svg><use href="#t-filter"/></svg></button><button aria-label="Filtr"><svg><use href="#t-8"/></svg></button><button class="dd" aria-label="Więcej"><svg class="caret"><use href="#caret"/></svg></button><button disabled class="off" aria-label="Cofnij wybór"><svg><use href="#t-9"/></svg></button><button disabled class="off" aria-label="Wyżej"><svg><use href="#t-10"/></svg></button><button aria-label="Prostokąt"><svg><use href="#t-rect"/></svg></button><button class="dd" aria-label="Więcej"><svg class="caret"><use href="#caret"/></svg></button><button disabled class="off" aria-label="Bryła"><svg><use href="#t-11"/></svg></button><button aria-label="Sześcian"><svg><use href="#t-cube"/></svg></button>
    </div>
    <div class="tset td">
      <span class="combo c51"><select aria-label="Warstwa"><option>1</option></select><span class="drop"><svg><use href="#caret"/></svg></span></span>
      <button aria-label="Dopasuj"><svg><use href="#t-fit"/></svg></button><button aria-label="Przesuń"><svg><use href="#t-pan"/></svg></button><button aria-label="Obróć"><svg><use href="#t-rot"/></svg></button><button aria-label="Perspektywa"><svg><use href="#t-persp"/></svg></button><button aria-label="Układ"><svg><use href="#t-grid"/></svg></button><button class="dd" aria-label="Więcej"><svg class="caret"><use href="#caret"/></svg></button><button aria-label="Przekrój"><svg><use href="#t-clip"/></svg></button><button class="dd" aria-label="Więcej"><svg class="caret"><use href="#caret"/></svg></button><button aria-label="Cieniowanie"><svg><use href="#t-shade"/></svg></button><button class="dd" aria-label="Więcej"><svg class="caret"><use href="#caret"/></svg></button><button aria-label="Pokaż"><svg><use href="#t-arrow"/></svg></button><button class="dd" aria-label="Więcej"><svg class="caret"><use href="#caret"/></svg></button><button aria-label="Edytuj przekrój"><svg><use href="#t-sec"/></svg></button><button aria-label="Obetnij przekrój"><svg><use href="#t-sec2"/></svg></button>
    </div>
    <div class="tset te"><button aria-label="Pomiar"><svg><use href="#t-meas"/></svg></button></div>
  </div>
  <div class="cue"><div class="cue-left"></div><div class="cue-right"></div></div>

  <main class="work">
    <aside class="resbar">
      <button aria-label="Nawigator złożenia"><svg><use href="#r-asm"/></svg></button>
      <button aria-label="Nawigator wiązań"><svg><use href="#r-con"/></svg></button>
      <button aria-label="Nawigator części"><svg><use href="#r-part"/></svg></button>
      <button class="on" aria-label="Nawigator operacji"><svg><use href="#r-op"/></svg></button>
      <button aria-label="Nawigator cech"><svg><use href="#r-fea"/></svg></button>
      <button aria-label="Nawigator obrabiarki"><svg><use href="#r-mach"/></svg></button>
      <button aria-label="Biblioteka"><svg><use href="#r-lib"/></svg></button>
      <button class="apart" aria-label="HD3D"><svg><use href="#r-info"/></svg></button>
      <button class="apart" aria-label="Przeglądarka"><svg><use href="#r-web"/></svg></button>
      <button class="apart" aria-label="Historia"><svg><use href="#r-clock"/></svg></button>
      <button aria-label="Role"><svg><use href="#r-role"/></svg></button>
      <button aria-label="Kreator"><svg><use href="#r-wiz"/></svg></button>
      <button aria-label="Zespół"><svg><use href="#r-team"/></svg></button>
    </aside>

    <section class="navigator">
      <h2><svg><use href="#n-pin"/></svg>Nawigator operacji - Geometria</h2>
      <div class="treebox">
        <table class="tree">
          <thead><tr><th>Nazwa</th><th class="c2"><b></b></th></tr></thead>
          <tbody>
            <tr><td><div class="n0">GEOMETRY</div></td><td>0</td></tr>
            <tr><td><div class="n1"><i class="branch"></i><svg><use href="#n-fold"/></svg>Nieużywane elementy</div></td><td>0</td></tr>
            <tr><td><div class="n1e"><i class="exp"></i><i class="dash"></i><svg><use href="#n-mcs"/></svg>MCS_MILL</div></td><td>0</td></tr>
            <tr><td><div class="n2e"><i class="exp"></i><i class="dash"></i><svg><use href="#n-wp"/></svg>WORKPIECE</div></td><td>0</td></tr>
            <tr><td><div class="n3"><i class="branch"></i><svg class="ex"><use href="#n-ex"/></svg><svg><use href="#n-op"/></svg><span>GORA</span></div></td><td>0</td></tr>
            <tr><td><div class="n3"><i class="branch"></i><svg class="ex"><use href="#n-ex"/></svg><svg><use href="#n-op"/></svg><span>PRZOD</span></div></td><td>0</td></tr>
            <tr><td><div class="n3"><i class="branch"></i><svg class="ex"><use href="#n-ex"/></svg><svg><use href="#n-op"/></svg><span>LEWA.PRZOD</span></div></td><td>0</td></tr>
            <tr class="sel"><td><div class="n3"><i class="branch"></i><svg class="ex"><use href="#n-ex"/></svg><svg><use href="#n-op"/></svg><span>PRAWA.PRZOD</span></div></td><td>0</td></tr>
            <tr><td><div class="n3"><i class="branch"></i><svg class="ex"><use href="#n-ex"/></svg><svg><use href="#n-op"/></svg><span>PRAWA.TYL</span></div></td><td>0</td></tr>
            <tr><td><div class="n3"><i class="branch"></i><svg class="ex"><use href="#n-ex"/></svg><svg><use href="#n-op"/></svg><span>TYL</span></div></td><td>0</td></tr>
            <tr><td><div class="n3"><i class="branch"></i><svg class="ex"><use href="#n-ex"/></svg><svg><use href="#n-op"/></svg><span>LEWA.TYL</span></div></td><td>0</td></tr>
            <tr><td><div class="n3"><i class="branch"></i><svg class="ex"><use href="#n-ex"/></svg><svg><use href="#n-op"/></svg><span>GÓRA_2</span></div></td><td>0</td></tr>
            <tr><td><div class="n3"><i class="branch"></i><svg class="ex"><use href="#n-ex"/></svg><svg><use href="#n-op"/></svg><span>PRZOD_2</span></div></td><td>0</td></tr>
            <tr><td><div class="n3"><i class="branch"></i><svg class="ex"><use href="#n-ex"/></svg><svg><use href="#n-op"/></svg><span>LEWA.PRZOD_2</span></div></td><td>0</td></tr>
            <tr><td><div class="n3"><i class="branch"></i><svg class="ex"><use href="#n-ex"/></svg><svg><use href="#n-op"/></svg><span>PRAWA.PRZOD_2</span></div></td><td>0</td></tr>
            <tr><td><div class="n3"><i class="branch"></i><svg class="ex"><use href="#n-ex"/></svg><svg><use href="#n-op"/></svg><span>PRAWA.TYL_2</span></div></td><td>0</td></tr>
            <tr><td><div class="n3"><i class="branch"></i><svg class="ex"><use href="#n-ex"/></svg><svg><use href="#n-op"/></svg><span>TYL_2</span></div></td><td>0</td></tr>
            <tr><td><div class="n3"><i class="branch last"></i><svg class="ex"><use href="#n-ex"/></svg><svg><use href="#n-op"/></svg><span>LEWA.TYL_2</span></div></td><td>0</td></tr>
            <tr><td></td><td></td></tr><tr><td></td><td></td></tr><tr><td></td><td></td></tr><tr><td></td><td></td></tr><tr><td></td><td></td></tr><tr><td></td><td></td></tr><tr><td></td><td></td></tr><tr><td></td><td></td></tr><tr><td></td><td></td></tr><tr><td></td><td></td></tr>
          </tbody>
        </table>
      </div>
    </section>

    <form class="dialog">
      <div class="dialog-top"></div>
      <div class="panel">
        <h3>Geometria<button type="button" aria-label="Zwiń"><svg><use href="#chev-up"/></svg></button></h3>
        <div class="body geo">
          <div class="row tall top"><label for="geo">Geometria</label><span class="combo c116"><select id="geo"><option>WORKPIECE</option></select><span class="drop"><svg><use href="#caret"/></svg></span></span><button type="button" class="sq" aria-label="Nowa geometria"><svg><use href="#d-geom"/></svg></button><button type="button" class="sq" aria-label="Edytuj"><svg><use href="#d-wrench"/></svg></button></div>
          <div class="row tall"><span class="lab">Określ część</span><button type="button" class="sq" disabled aria-label="Część"><svg><use href="#d-part"/></svg></button><button type="button" class="sq" aria-label="Pokaż"><svg><use href="#d-flash"/></svg></button></div>
          <div class="row tall"><span class="lab">Określ obiekty chronione</span><button type="button" class="sq" aria-label="Obiekty chronione"><svg><use href="#d-check"/></svg></button><button type="button" class="sq" disabled aria-label="Pokaż"><svg><use href="#d-flash"/></svg></button></div>
          <div class="row tall"><span class="lab">Określ obszar obróbki</span><button type="button" class="sq" aria-label="Obszar obróbki"><svg><use href="#d-area"/></svg></button><button type="button" class="sq" disabled aria-label="Pokaż"><svg><use href="#d-flash"/></svg></button></div>
          <div class="row tall"><span class="lab">Określ granice przycięcia</span><button type="button" class="sq" aria-label="Granice"><svg><use href="#d-trim"/></svg></button><button type="button" class="sq" disabled aria-label="Pokaż"><svg><use href="#d-flash"/></svg></button></div>
          <div class="row tall"><span class="lab">Określ poprzedni IPW</span><button type="button" class="sq" disabled aria-label="Poprzedni IPW"><svg><use href="#d-prev"/></svg></button><button type="button" class="sq" aria-label="Pokaż"><svg><use href="#d-flash"/></svg></button></div>
        </div>
        <h3>Narzędzie<button type="button" aria-label="Rozwiń"><svg><use href="#chev-dn"/></svg></button></h3>
        <h3 class="hot">Oś narzędzia<button type="button" aria-label="Zwiń"><svg><use href="#chev-up"/></svg></button></h3>
        <div class="body axis">
          <div class="row mid"><label for="axis">Oś</label><span class="combo c140"><select id="axis"><option>Określ wektor</option></select><span class="drop"><svg><use href="#caret"/></svg></span></span></div>
          <div class="row mid"><svg class="tick"><use href="#tick"/></svg><span class="lab">Określ wektor</span><button type="button" class="sq small" aria-label="Odwróć"><svg><use href="#d-rev"/></svg></button><button type="button" class="sq small" aria-label="Orientacja"><svg><use href="#d-ori"/></svg></button><button type="button" class="sq vec" aria-label="Typ wektora"><svg><use href="#d-vec"/></svg><span class="drop"><svg><use href="#caret"/></svg></span></button></div>
        </div>
        <h3>Ustawienia ścieżki<button type="button" aria-label="Zwiń"><svg><use href="#chev-up"/></svg></button></h3>
        <div class="body path">
          <div class="row tall top"><label for="met">Metoda</label><span class="combo c116"><select id="met"><option>MILL_ROUGH</option></select><span class="drop"><svg><use href="#caret"/></svg></span></span><button type="button" class="sq" aria-label="Nowa metoda"><svg><use href="#d-meth"/></svg></button><button type="button" class="sq" aria-label="Edytuj"><svg><use href="#d-wrench"/></svg></button></div>
          <div class="row mid"><label for="pat">Wzór ścieżki</label><span class="combo c140 pic"><select id="pat"><option>Wzdłuż części</option></select><svg class="pre"><use href="#d-pat"/></svg><span class="drop"><svg><use href="#caret"/></svg></span></span></div>
          <div class="row"><label for="step">Szerokość skraw.</label><span class="combo c140"><select id="step"><option>% Średnicy</option></select><span class="drop"><svg><use href="#caret"/></svg></span></span></div>
          <div class="row"><label for="pct">Procent płaskiej średnicy</label><span class="field f80 picked"><input id="pct" type="text" value="50.0000"></span></div>
          <div class="row"><label for="cut">Globalna głęb.skraw.</label><span class="combo c140"><select id="cut"><option>Stała</option></select><span class="drop"><svg><use href="#caret"/></svg></span></span></div>
          <div class="row"><label for="dist" class="cutoff">Odległość maksymalna</label><span class="field f80"><input id="dist" type="text" value="10.0000"></span><span class="combo c61"><select aria-label="Jednostka"><option>mm</option></select><span class="drop"><svg><use href="#caret"/></svg></span></span></div>
          <div class="row tall"><span class="lab low">Poziomy obróbki</span><button type="button" class="sq" aria-label="Poziomy"><svg><use href="#d-level"/></svg></button></div>
          <div class="row tall"><span class="lab"></span><button type="button" class="sq" aria-label="Ruchy"></button></div>
        </div>
      </div>
    </form>

    <section class="view">
      <svg class="scene" viewBox="603 197 822 592" preserveAspectRatio="xMinYMin slice">
        <path d="M1036 320L1425 484V789H711L615 749 613 625z" fill="#e8f2f5"/>
        <path d="M1036 320l2 124L615 749 613 625z" fill="#dce4e5"/>
        <path d="M1036 320l389 164v123L1038 444z" fill="#d7dee0"/>
        <path d="M613 625l108 46-106 78z" fill="#c7cccc"/>
        <path d="M721 671l282 118H711l-96-40z" fill="#d2dadb"/>
        <path d="M1425 655v134h-186z" fill="#d7dfe1"/>
        <g fill="none" stroke="#333" stroke-width="1"><path d="M1425 484L1036 320 613 625l2 124 96 40M1036 320l2 124M1425 607L1038 444 615 749M613 625l390 164M1425 655l-186 134M1425 780l-12 9"/></g>
        <path d="M824 596l106 146 2 47h-41l-65-89z" fill="#7b888c"/>
        <path d="M842 721l89 38 1 30h-41z" fill="#667276"/>
        <path d="M930 742l285 19 1 28H932z" fill="#6d7b7e"/>
        <path d="M931 759l72 30h-71z" fill="#596062"/>
        <path d="M1391 633l3 104-73 52h-105l-1-28z" fill="#89989c"/>
        <path d="M1393 678l1 59-73 52h-82z" fill="#778488"/>
        <path d="M824 596l176-128 285 19 106 146-176 128-285-19z" fill="#c8dfe4"/>
        <g fill="none" stroke="#3c4446"><path d="M824 596l176-128 285 19 106 146-176 128-285-19zM824 596l2 104M930 742l2 47M1215 761l1 28M1391 633l3 104M835 717l168 72M1397 675l-158 114"/></g>
        <path d="M826 700l65 89M1394 737l-73 52" stroke="#36c" stroke-width="1.500" fill="none"/>
        <path d="M879 720l-62 14-1-3-17 8 18 1-1-3 62-15z" fill="#c8ad50" stroke="#a58c38" stroke-width=".6"/>
        <path d="M1107 592l-1-70" stroke="#02b" stroke-width="2"/><path d="M1105.500 506l4 18q-4 2-7 0z" fill="#02b"/>
        <path d="M1107 592l-52 38" stroke="#d88" stroke-width="1.500"/><path d="M1043 638l10-12 6 3-1 4z" fill="#f4a3a3" stroke="#c88" stroke-width=".5"/>
        <path d="M1107 592l65 27" stroke="#7b7" stroke-width="1.500"/><path d="M1188 626l-14-9-3 3 3 4z" fill="#aee8ae" stroke="#7b7" stroke-width=".5"/>
        <g fill="none" stroke="#c3c5c7"><path d="M1108 620l1 98M1109 663l-42 29 1 55 53 23 42-30-1-56-53-21M1109 718l-41 30-32 23M1109 718l54 22 40 17"/></g>
        <path d="M1107.500 607l4 13q-4 3-7 0z" fill="#888"/>
        <path d="M1109 672q5 14 0 44-5-30 0-44z" fill="#7b92ca" stroke="#55a" stroke-width=".6"/>
        <path d="M1106 721l-22 12-8 9 9-3z" fill="#eda7a7"/><path d="M1114 720l30 10 8 6-11-1z" fill="#aee0ac"/>
        <path d="M1026 778l10-11 4 4zM1215 762l-14-8-1 5z" fill="#eee" stroke="#bbb" stroke-width=".5"/>
        <g class="axis-text"><text x="1110" y="504" fill="#14f">ZM</text><text x="1044" y="651" fill="#c22">XM</text><text x="1169" y="640" fill="#283">YM</text><text x="1103" y="606" fill="#bcc4c8">Z</text><text x="1113" y="670" fill="#14f">ZC</text><text x="1077" y="755" fill="#c22">XC</text><text x="1136" y="750" fill="#283">YC</text><text x="1019" y="786" fill="#a5a5a5">X</text><text x="1216" y="770" fill="#bbb">Y</text></g>
      </svg>
    </section>
    <svg class="marks" width="340" height="110" viewBox="296 460 340 110" fill="none" stroke="#00a2e8" stroke-linejoin="round"><path stroke-width="5" d="M300 478v22q0 8 12 10l33 4h247l26-6q10-1 10-7v-20q0-6-9-7l-29-6H345l-33 2q-12 1-12 8z"/><rect x="534" y="524" width="59" height="36" rx="9" stroke-width="5"/></svg>
  </main>
</div>
</body>
</html>
```
FILE: styles.css
```css
* { box-sizing: border-box; }
body { margin: 0; font: 11px/15px "Noto Sans", "Open Sans", sans-serif; color: #1c1c1c; }
button, select, input { font: inherit; color: inherit; margin: 0; padding: 0; border: 0; background: none; border-radius: 0; }
svg { display: block; flex: none; }
i { display: block; flex: none; }
h1, h2, h3 { margin: 0; font-size: inherit; font-weight: 400; }
.defs { position: absolute; width: 0; height: 0; }
.app { display: flex; flex-direction: column; height: 100vh; overflow: hidden; background: #dadada; }
.caret { width: 6px; height: 4px; }

.titlebar { display: flex; align-items: center; height: 27px; padding: 0 0 5px 2px; border-top: 3px solid #555961; flex: none; color: #e8e8e8;
  background: linear-gradient(90deg, transparent 120px, #1c1c1c 330px), linear-gradient(#5c5c5c, #383838 50%, #1c1c1c); }
.logo { width: 20px; height: 18px; }
.qa { width: 23px; display: flex; justify-content: center; }
.qa svg { width: 15px; height: 15px; }
.save { width: 14px; height: 14px; background: #000; margin: 0 7px; }
.qsep { width: 1px; height: 15px; background: #888; margin: 0 2px; }
.qdrop { width: 14px; display: flex; justify-content: center; color: #ddd; }
.okno { display: flex; align-items: center; gap: 4px; margin-left: 5px; color: #b4b4b4; font-size: 12px; }
.okno svg { width: 15px; height: 15px; }
.okno .caret { width: 6px; height: 4px; }
.qmore { border-top: 1px solid #ddd; padding-top: 2px; margin-left: 6px; color: #ddd; }
.title { margin-left: auto; padding-right: 238px; white-space: nowrap; }

.tabs { display: flex; align-items: stretch; height: 26px; background: #1c1c1c; color: #f4f4f4; flex: none; }
.tab { padding: 0 7px; white-space: nowrap; }
.tab.file { width: 59px; padding: 0 0 2px; background: linear-gradient(#4d82b8, #2b5ca0 45%, #2458a8 70%, #49b8f0); border: 1px solid #4585c0; border-radius: 2px 2px 0 0; }
.tab.active { margin: 0 0 0 3px; width: 87px; padding: 0; color: #00004c; background: #f1f3f3; border-radius: 3px 3px 0 0; }

.ribbon { display: flex; height: 92px; flex: none; overflow: hidden; background: linear-gradient(#e6e6e6, #d6d6d6 50%, #cbcbcb); border-bottom: 1px solid #8c8c8c; }
.group { display: flex; flex-direction: column; flex: none; margin: 5px 0 2px; border-right: 1px solid #fff; box-shadow: inset -1px 0 #bbb; }
.g-insert { width: 216px; padding-left: 8px; } .g-actions { width: 87px; } .g-oper { width: 405px; padding-left: 10px; }
.g-part { width: 119px; } .g-analysis { width: 82px; } .g-geom { width: 127px; } .g-sync { width: 348px; } .g-find { border: 0; box-shadow: none; padding-left: 6px; }
.tools { display: flex; height: 70px; }
.tools.mid { justify-content: center; }
.gap9 { gap: 9px; }
.big { display: block; flex: none; align-self: flex-start; padding-top: 1px; text-align: center; white-space: nowrap; color: #000; }
.big > svg:first-child { width: 32px; height: 32px; margin: 0 auto 3px; }
.big .caret { display: inline-block; vertical-align: middle; }
.big:disabled, .lines button:disabled { color: #9b9b9b; text-shadow: 0 1px #eee; }
.big:disabled > svg:first-child, .minis svg, .lines svg { opacity: .5; }
.big .dark { width: 5px; height: 3px; color: #111; }
.w40 { width: 40px; } .w54 { width: 54px; } .w60 { width: 60px; } .w62 { width: 62px; } .w82 { width: 82px; } .w88 { width: 88px; }
.minis { display: flex; flex-direction: column; gap: 6px; }
.minis svg { width: 16px; height: 16px; }
.wpgrid { display: grid; grid-template-columns: 25px 25px; grid-auto-rows: 22px; align-content: start; margin-top: -2px; padding-left: 8px; }
.wpgrid button { display: grid; place-items: center; }
.wpgrid svg { width: 18px; height: 18px; }
.group footer { display: flex; align-items: center; height: 14px; padding-right: 8px; color: #3a3a3a; white-space: nowrap; }
.group footer span { flex: 1; text-align: center; }
.lines { display: flex; flex-direction: column; margin-top: -3px; }
.lines button { display: flex; align-items: center; gap: 4px; height: 22px; white-space: nowrap; }
.lines svg { width: 16px; height: 16px; }
.l1 { width: 132px; } .l2 { width: 108px; }
.more { width: 39px; }
.more span { display: grid; place-items: center; height: 34px; margin-bottom: 1px; border: 1px solid #bbb; border-radius: 3px; background: #e2e2e2; }
.more span svg { width: 20px; height: 20px; }

.toolbar { display: flex; align-items: center; height: 30px; flex: none; padding-left: 8px; background: linear-gradient(#c8c8c8, #d9d9d9 40%, #dadada); border-bottom: 1px solid #b4b4b4; color: #000; }
.menu { display: flex; align-items: center; width: 70px; gap: 4px; }
.menu svg { width: 17px; height: 16px; } .menu span { font-size: 12px; } .menu .caret { width: 5px; height: 3px; margin-left: -2px; }
.tset { display: flex; align-items: center; height: 22px; border-left: 1px solid #fff; box-shadow: -1px 0 #bbb; }
.tset > button { display: grid; place-items: center; width: 24px; height: 22px; }
.tset > button svg { width: 17px; height: 17px; }
.tset > .dd { width: 14px; } .tset > .dd svg { width: 5px; height: 3px; }
.off svg { opacity: .65; }
.ta { width: 113px; padding-left: 7px; } .tb { width: 64px; padding-left: 8px; } .tc { width: 531px; padding-left: 12px; } .td { width: 373px; padding-left: 11px; } .te { width: 40px; justify-content: center; border-right: 1px solid #fff; }
.tc .combo { margin-right: 9px; } .tc .c142 { margin-right: 6px; } .td .combo { margin-right: 6px; }

.combo { display: grid; flex: none; height: 22px; border: 2px solid #777; border-color: #666 #8a8a8a #8a8a8a #666; border-radius: 3px; background: #fff; overflow: hidden; box-shadow: 1px 1px #f4f4f4; }
.combo select, .combo .drop, .combo .pre { grid-area: 1 / 1; }
.combo select { appearance: none; width: 100%; height: 100%; padding: 0 20px 0 3px; color: #000; opacity: 1; }
.drop { justify-self: end; display: grid; place-items: center; width: 16px; height: 100%; background: linear-gradient(#3f86d8, #b8dcfa 25%, #8cc4f4 70%, #5ca4ea); border-left: 1px solid #678; color: #111; pointer-events: none; }
.drop svg { width: 11px; height: 7px; }
.combo.dis { height: 20px; border: 1px solid #999; background: #d4d4d4; } .combo.dis select { color: #999; text-shadow: 1px 1px #fff; }
.dis .drop { background: #e8e8e8; color: #999; border-color: #aaa; }
.c134 { width: 134px; } .c142 { width: 142px; } .c51 { width: 51px; } .c116 { width: 116px; } .c140 { width: 140px; } .c61 { width: 61px; }
.td .combo { height: 20px; border-width: 1px; }

.cue { display: flex; height: 22px; flex: none; border-top: 1px solid #fff; border-bottom: 1px solid #8c8c8c; }
.cue-left { flex: 920 1 0; border-right: 1px solid #999; } .cue-right { flex: 504 1 0; border-left: 1px solid #fff; }

.work { display: flex; flex: 1; min-height: 0; position: relative; }
.resbar { display: flex; flex-direction: column; align-items: flex-end; gap: 2px; width: 33px; padding-top: 17px; background: linear-gradient(90deg, #bcbcbc, #aaa); flex: none; overflow: hidden; border-right: 1px solid #777; }
.resbar button { display: grid; place-items: center; width: 26px; height: 40px; flex: none; background: linear-gradient(#e0e0e0, #cdcdcd); border: 1px solid #666; border-right: 0; border-radius: 4px 0 0 4px; box-shadow: inset 1px 1px #f2f2f2; }
.resbar svg { width: 24px; height: 24px; }
.resbar .on { width: 28px; height: 43px; margin: -1px 0; background: #f0f0f0; }
.resbar .apart { margin-top: 12px; }

.navigator { display: flex; flex-direction: column; width: 268px; flex: none; padding: 0 9px; background: #ebebeb; }
.navigator h2 { display: flex; align-items: center; gap: 11px; height: 30px; padding-left: 6px; font-weight: 700; color: #000; }
.navigator h2 svg { width: 10px; height: 11px; }
.treebox { flex: 1; min-height: 0; overflow: hidden; border: 1px solid #666; border-bottom: 0; background: #fff; }
.tree { border-collapse: separate; border-spacing: 0; table-layout: fixed; width: 100%; }
.tree th { height: 20px; padding: 0 7px; text-align: left; font-weight: 400; color: #000; background: linear-gradient(#fafafa, #e2e4e5); border-bottom: 1px solid #999; }
.tree th.c2 { width: 11px; padding: 0 0 0 6px; border-left: 1px solid #bbb; overflow: hidden; }
.c2 b { display: block; width: 4px; height: 8px; border: 2px solid #412; border-right: 0; border-radius: 4px 0 0 4px; }
.tree td { height: 20px; padding: 0; line-height: 19px; border-bottom: 1px solid #e2e2e2; white-space: nowrap; overflow: hidden; }
.tree td:nth-child(2) { border-left: 1px solid #000; padding-left: 3px; color: #333; }
.tree tr:nth-child(even) td { background: #f6f6f6; }
.tree td div { display: flex; align-items: center; height: 19px; color: #222; }
.tree td svg { width: 15px; height: 15px; margin-right: 3px; }
.tree td .ex { width: 10px; height: 16px; margin: 0 4px 0 4px; }
.n0 { padding-left: 4px; } .n1 { padding-left: 10px; } .n1e { padding-left: 5px; } .n2e { padding-left: 24px; } .n3 { padding-left: 48px; }
.tree .n3 svg { margin-right: 2px; } .tree .n3 .ex { margin-right: 4px; }
.n3 span { flex: 1; padding-left: 1px; }
.branch { width: 9px; height: 20px; }
.branch::before { content: ""; display: block; height: 10px; border-left: 1px dotted #999; border-bottom: 1px dotted #999; }
.branch::after { content: ""; display: block; height: 10px; border-left: 1px dotted #999; }
.branch.last::after { border: 0; }
.n1 .branch::before { border-left: 0; } .n1 .branch { margin-right: 2px; }
.exp { width: 9px; height: 9px; border: 1px solid #888; border-radius: 2px; background: linear-gradient(#333, #333) center / 5px 1px no-repeat #fff; }
.dash { width: 5px; border-top: 1px dotted #999; margin-right: 2px; }
.sel .n3 span { background: #39f; color: #fff; }
.tree tr.sel td:nth-child(2) { background: #39f; color: #fff; }

.dialog { width: 302px; flex: none; padding: 0 5px; background: #ebebeb; border-left: 2px solid #888; border-right: 1px solid #666; overflow: hidden; }
.dialog-top { height: 4px; margin: 0 -5px 3px; border-top: 1px solid #ddd; background: #6c6c6c; }
.panel { border-right: 2px solid #777; border-left: 1px solid #999; background: #d2d2d2; }
.panel h3 { display: flex; align-items: stretch; justify-content: space-between; height: 23px; padding-left: 5px; line-height: 23px; color: #00004c; background: linear-gradient(#fafafa, #e6e8ea 60%, #d4d6d8); border-bottom: 1px solid #777; }
.panel h3 button { display: grid; place-items: center; width: 22px; border-left: 1px solid #aaa; color: #5a5a5a; }
.panel h3 svg { width: 12px; height: 9px; }
.panel h3.hot { color: #0a4fb0; } .panel .hot button { color: #27d; }
.body { padding: 0 7px; }
.geo { padding: 5px 7px 8px; }
.row { display: flex; align-items: center; gap: 4px; height: 25px; }
.row.mid { height: 30px; } .row.tall { height: 34px; }
.row label, .row .lab { flex: 1; white-space: nowrap; color: #000; min-width: 0; }
.geo .tall .lab { padding-top: 3px; }
.row.top > label, .row.top > .combo { align-self: flex-start; margin-top: 2px; } .row.top > label { line-height: 22px; }
.cutoff { overflow: hidden; }
.sq { display: grid; place-items: center; width: 30px; height: 31px; flex: none; border: 2px solid #6c6c6c; border-radius: 4px; background: linear-gradient(#f4f4f4, #dcdcdc 45%, #c6c6c6 50%, #dedede); box-shadow: 1px 1px #f6f6f6; }
.sq svg { width: 23px; height: 23px; }
.sq:disabled { border: 1px solid #b4b4b4; background: #dedede; } .sq:disabled svg { opacity: .35; }
.sq.small { width: 22px; height: 22px; } .sq.small svg { width: 16px; height: 16px; }
.vec { display: flex; width: 46px; overflow: hidden; } .vec > svg { width: 26px; height: 24px; } .vec .drop svg { width: 9px; height: 5px; }
.axis { padding-top: 2px; padding-bottom: 10px; } .tick { width: 13px; height: 12px; margin-right: 3px; }
.path { padding-top: 4px; }
.path .top > label, .path .top > .combo { margin-top: 3px; }
.pic { height: 25px; } .pic .pre { width: 17px; height: 16px; margin: 3px; } .pic select { padding-left: 22px; }
.field { display: flex; align-items: center; height: 21px; padding: 0 1px 0 4px; border: 2px solid #777; border-radius: 3px; background: #fff; }
.field input { width: 100%; height: 17px; padding-top: 2px; text-align: right; font: 15px/15px "Liberation Mono", monospace; color: #222; }
.picked input { background: #39f; color: #fff; }
.f80 { width: 80px; }

.view { flex: 1; min-width: 0; background: #fff; overflow: hidden; }
.scene { width: 100%; height: 100%; }
.axis-text { font: 13px "Liberation Sans", sans-serif; }
.marks { position: absolute; left: 296px; top: 263px; pointer-events: none; }
```
